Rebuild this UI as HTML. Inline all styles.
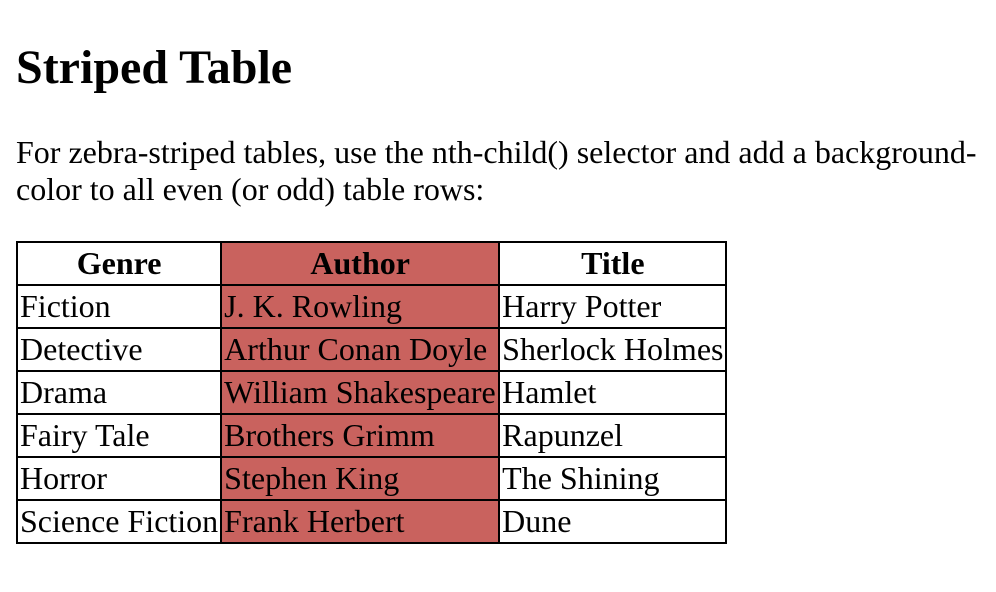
<!DOCTYPE html>
<html><head><style>
html,body{margin:0;padding:0;background:#fff;width:996px;height:592px;overflow:hidden;font-family:"Liberation Serif",serif;color:#000}
h2{position:absolute;left:16px;top:40px;margin:0;font-size:48px;line-height:55px;font-weight:bold}
p{position:absolute;left:16px;top:134px;margin:0;font-size:32px;line-height:37px;width:970px}
table{position:absolute;left:16px;top:241px;border-collapse:collapse;font-size:32px;line-height:37px}
td,th{border:2px solid #000;padding:2px 2px;white-space:nowrap;text-align:left}
th{text-align:center}
td:nth-child(2),th:nth-child(2){background:#c9625e}
</style></head><body>
<h2>Striped Table</h2>
<p>For zebra-striped tables, use the nth-child() selector and add a background-color to all even (or odd) table rows:</p>
<table>
<tr><th style="width:198px">Genre</th><th style="width:272px">Author</th><th style="width:221px">Title</th></tr>
<tr><td>Fiction</td><td>J. K. Rowling</td><td>Harry Potter</td></tr>
<tr><td>Detective</td><td>Arthur Conan Doyle</td><td>Sherlock Holmes</td></tr>
<tr><td>Drama</td><td>William Shakespeare</td><td>Hamlet</td></tr>
<tr><td>Fairy Tale</td><td>Brothers Grimm</td><td>Rapunzel</td></tr>
<tr><td>Horror</td><td>Stephen King</td><td>The Shining</td></tr>
<tr><td>Science Fiction</td><td>Frank Herbert</td><td>Dune</td></tr>
</table>
</body></html>
